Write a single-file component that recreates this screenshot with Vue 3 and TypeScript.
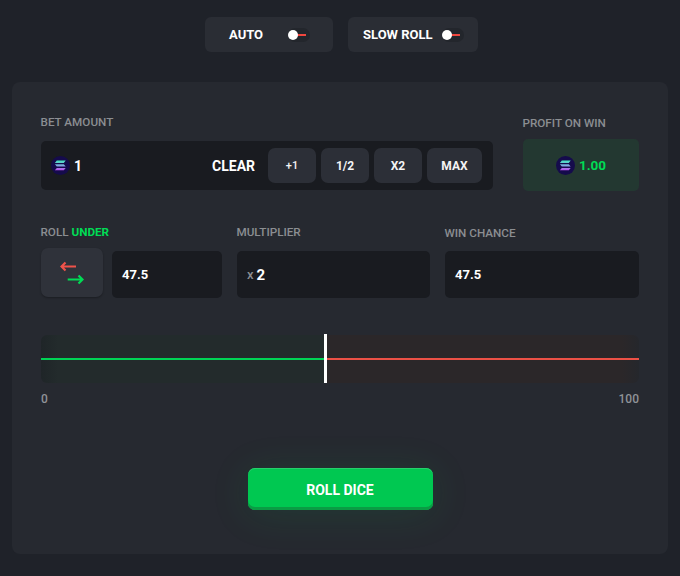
<script setup lang="ts">
const toggles = ['AUTO', 'SLOW ROLL']
const betButtons = ['+1', '1/2', 'X2', 'MAX']
const marker = 47.5
</script>

<template>
  <div class="page">
    <div class="toggles">
      <div v-for="t in toggles" :key="t" class="toggle-card">
        <span class="toggle-label">{{ t }}</span>
        <span class="switch"><i class="switch-line"></i><i class="switch-knob"></i></span>
      </div>
    </div>

    <div class="panel">
      <div class="row-bet">
        <div class="bet-col">
          <div class="label">BET AMOUNT</div>
          <div class="bet-field">
            <svg class="sol" viewBox="0 0 19 19">
              <defs>
                <linearGradient id="solg" x1="0" y1="0" x2="0" y2="1">
                  <stop offset="0" stop-color="#45e8c0" />
                  <stop offset="0.5" stop-color="#7fa8e0" />
                  <stop offset="1" stop-color="#c04ff0" />
                </linearGradient>
              </defs>
              <circle cx="9.5" cy="9.5" r="9.5" fill="#150b4c" />
              <path d="M5.8 4.6h8.9l-1.9 2.3H3.9zM3.9 8.3h8.9l1.9 2.3H5.8zM5.8 12h8.9l-1.9 2.3H3.9z" fill="url(#solg)" />
            </svg>
            <span class="bet-value">1</span>
            <span class="clear">CLEAR</span>
            <button v-for="b in betButtons" :key="b" class="mini" :class="{ plus: b === '+1' }">{{ b }}</button>
          </div>
        </div>
        <div class="profit-col">
          <div class="label">PROFIT ON WIN</div>
          <div class="profit-card">
            <svg class="sol" viewBox="0 0 19 19">
              <circle cx="9.5" cy="9.5" r="9.5" fill="#150b4c" />
              <path d="M5.8 4.6h8.9l-1.9 2.3H3.9zM3.9 8.3h8.9l1.9 2.3H5.8zM5.8 12h8.9l-1.9 2.3H3.9z" fill="url(#solg)" />
            </svg>
            <span class="profit-value">1.00</span>
          </div>
        </div>
      </div>

      <div class="row-roll">
        <div class="roll-col">
          <div class="label">ROLL <b class="under">UNDER</b></div>
          <div class="roll-controls">
            <button class="flip">
              <svg width="24" height="24" viewBox="0 0 24 24" fill="none" stroke-width="2.2">
                <path d="M16 5.5H1.5M5.5 1.5l-4 4 4 4" stroke="#f0524a" />
                <path d="M7.7 18.5h14.8M18.5 14.5l4 4-4 4" stroke="#00dc55" />
              </svg>
            </button>
            <div class="field roll-input">47.5</div>
          </div>
        </div>
        <div class="multi-col">
          <div class="label">MULTIPLIER</div>
          <div class="field"><span class="times">x</span> <span class="big">2</span></div>
        </div>
        <div class="chance-col">
          <div class="label">WIN CHANCE</div>
          <div class="field">47.5</div>
        </div>
      </div>

      <div class="slider">
        <div class="track-left" :style="{ width: marker + '%' }"><i class="line green"></i></div>
        <div class="track-right"><i class="line red"></i></div>
        <i class="thumb" :style="{ left: marker + '%' }"></i>
      </div>
      <div class="scale"><span>0</span><span>100</span></div>

      <button class="roll">ROLL DICE</button>
    </div>
  </div>
</template>

<style>
body {
  background: #1f2229;
}
</style>

<style scoped>
.page {
  width: 680px;
  height: 576px;
  overflow: hidden;
  background: #1f2229;
  font-family: Roboto, "Liberation Sans", sans-serif;
  color: #fff;
  padding-top: 17px;
  box-sizing: border-box;
}
.toggles {
  display: flex;
  gap: 15px;
  margin-left: 205px;
}
.toggle-card {
  height: 35px;
  border-radius: 6px;
  background: #2a2d34;
  display: flex;
  align-items: center;
  box-sizing: border-box;
}
.toggle-card:first-child {
  width: 128px;
  padding-left: 24px;
  gap: 25px;
}
.toggle-card:last-child {
  width: 130px;
  padding-left: 15px;
  gap: 9px;
}
.toggle-label {
  font-size: 13px;
  font-weight: 700;
}
.switch {
  width: 22px;
  height: 14px;
  border-radius: 7px;
  background: #23262c;
  position: relative;
  display: block;
}
.switch-line {
  position: absolute;
  left: 6px;
  top: 6px;
  width: 12px;
  height: 2px;
  background: #f0473f;
}
.switch-knob {
  position: absolute;
  left: 0;
  top: 2px;
  width: 10px;
  height: 10px;
  border-radius: 50%;
  background: #fff;
}
.panel {
  width: 656px;
  height: 472px;
  margin: 30px 0 0 12px;
  border-radius: 8px;
  background: #262930;
  box-sizing: border-box;
  padding: 33px 29px 0;
}
.label {
  font-size: 11.7px;
  font-weight: 500;
  line-height: 14px;
  color: #8b8e92;
  margin-left: -0.5px;
}
.row-bet {
  display: flex;
  justify-content: space-between;
  align-items: flex-start;
}
.bet-field {
  margin-top: 12px;
  width: 452px;
  height: 49px;
  border-radius: 5px;
  background: #191b20;
  display: flex;
  align-items: center;
  padding: 0 11px 0 10px;
  box-sizing: border-box;
}
.sol {
  width: 19px;
  height: 19px;
  flex: none;
}
.bet-value {
  margin-left: 4px;
  flex: 1;
  font-size: 14px;
  font-weight: 700;
}
.clear {
  font-size: 14px;
  font-weight: 700;
  margin-right: 13px;
}
.mini {
  width: 48px;
  height: 35px;
  margin-left: 5px;
  border: none;
  border-radius: 7px;
  background: #2c2f37;
  color: #f4f4f4;
  font: 700 12px Roboto, "Liberation Sans", sans-serif;
  padding: 0;
}
.mini:first-of-type {
  margin-left: 0;
}
.mini:last-of-type {
  width: 55px;
}
.mini.plus {
  font-size: 11px;
  font-weight: 500;
}
.profit-col {
  margin-top: 1px;
  width: 116px;
}
.profit-card {
  margin-top: 9px;
  height: 52px;
  border-radius: 5px;
  background: #233831;
  display: flex;
  align-items: center;
  justify-content: center;
  gap: 4px;
}
.profit-value {
  font-size: 13.5px;
  font-weight: 700;
  color: #00dc55;
}
.row-roll {
  margin-top: 34px;
  display: flex;
  align-items: flex-end;
  gap: 15px;
}
.under {
  color: #00dc55;
  font-weight: 700;
}
.roll-controls {
  margin-top: 9px;
  display: flex;
  align-items: flex-start;
  gap: 9px;
}
.flip {
  width: 62px;
  height: 49px;
  border: none;
  border-radius: 7px;
  background: #2f323a;
  box-shadow: 0 1px 2px rgba(0, 0, 0, 0.3);
  padding: 0;
  display: flex;
  align-items: center;
  justify-content: center;
}
.field {
  height: 47px;
  border-radius: 5px;
  background: #191b20;
  display: flex;
  align-items: center;
  padding: 0 10px;
  box-sizing: border-box;
  font-size: 13px;
  font-weight: 700;
  margin-top: 11px;
}
.roll-input {
  width: 110px;
  margin-top: 3px;
}
.multi-col {
  width: 193px;
}
.multi-col .field {
  margin-top: 12px;
}
.chance-col {
  width: 194px;
}
.times {
  color: #8b8e92;
  font-weight: 500;
  margin-right: 3px;
}
.big {
  font-size: 15px;
}
.slider {
  position: relative;
  margin-top: 37px;
  height: 48px;
  display: flex;
  border-radius: 6px;
}
.track-left,
.track-right {
  position: relative;
  display: flex;
  align-items: center;
  padding-bottom: 1px;
  box-sizing: border-box;
}
.track-left {
  background: linear-gradient(90deg, #1f2528, #232b2c 17px);
  border-radius: 6px 0 0 6px;
}
.track-right {
  flex: 1;
  background: linear-gradient(270deg, #25272c, #2b2729 17px);
  border-radius: 0 6px 6px 0;
}
.line {
  display: block;
  width: 100%;
  height: 2px;
}
.green {
  background: #00d455;
}
.red {
  background: #ec5146;
}
.thumb {
  position: absolute;
  top: -1px;
  bottom: 0;
  width: 3px;
  margin-left: -1.5px;
  background: #fff;
}
.scale {
  margin-top: 9px;
  display: flex;
  justify-content: space-between;
  font-size: 12px;
  font-weight: 500;
  line-height: 14px;
  color: #8f9297;
}
.roll {
  display: block;
  margin: 62px auto 0;
  width: 185px;
  height: 42px;
  border: none;
  border-radius: 7px;
  background: #00c851;
  box-shadow: inset 0 -3px 0 #0a9c44, inset 0 1px 0 #26d06c, 0 4px 40px rgba(0, 200, 81, 0.12);
  color: #fff;
  font: 700 14px Roboto, "Liberation Sans", sans-serif;
  padding: 2px 0 0;
}
</style>
